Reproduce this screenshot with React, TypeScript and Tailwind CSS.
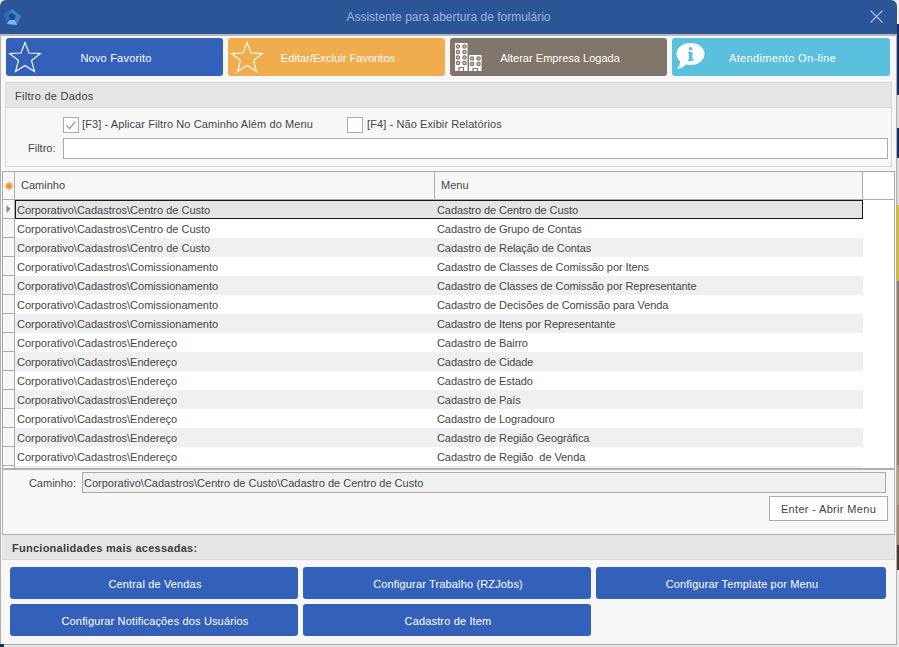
import React from "react";

const rows: [string, string][] = [
  ["Corporativo\\Cadastros\\Centro de Custo", "Cadastro de Centro de Custo"],
  ["Corporativo\\Cadastros\\Centro de Custo", "Cadastro de Grupo de Contas"],
  ["Corporativo\\Cadastros\\Centro de Custo", "Cadastro de Relação de Contas"],
  ["Corporativo\\Cadastros\\Comissionamento", "Cadastro de Classes de Comissão por Itens"],
  ["Corporativo\\Cadastros\\Comissionamento", "Cadastro de Classes de Comissão por Representante"],
  ["Corporativo\\Cadastros\\Comissionamento", "Cadastro de Decisões de Comissão para Venda"],
  ["Corporativo\\Cadastros\\Comissionamento", "Cadastro de Itens por Representante"],
  ["Corporativo\\Cadastros\\Endereço", "Cadastro de Bairro"],
  ["Corporativo\\Cadastros\\Endereço", "Cadastro de Cidade"],
  ["Corporativo\\Cadastros\\Endereço", "Cadastro de Estado"],
  ["Corporativo\\Cadastros\\Endereço", "Cadastro de País"],
  ["Corporativo\\Cadastros\\Endereço", "Cadastro de Logradouro"],
  ["Corporativo\\Cadastros\\Endereço", "Cadastro de Região Geográfica"],
  ["Corporativo\\Cadastros\\Endereço", "Cadastro de Região  de Venda"],
];

const Star = () => (
  <svg width="34" height="32" viewBox="0 0 34 32" fill="none" stroke="white" strokeWidth="1.1" strokeLinejoin="miter">
    <path d="M17 1.5 L21 12 L32.5 12.5 L23.5 19.5 L26.5 30.5 L17 24.5 L7.5 30.5 L10.5 19.5 L1.5 12.5 L13 12 Z" />
  </svg>
);

const Building = () => {
  const c = "#80766a";
  const win = (x: number, y: number) => (
    <circle key={`${x}-${y}`} cx={x} cy={y} r="1.7" fill="#cfcac4" stroke={c} strokeWidth="1.2" />
  );
  return (
    <svg width="30" height="29" viewBox="0 0 30 29">
      <rect x="1" y="0" width="12.5" height="28" fill="white" />
      <rect x="15" y="12" width="12.500" height="16" fill="white" />
      {[4, 10.500].flatMap((x) => [3.500, 9, 14.500, 20].map((y) => win(x, y)))}
      {[18, 24.500].flatMap((x) => [15.500, 21].map((y) => win(x, y)))}
      <path d="M5 28V24.500H9.500V28" fill="none" stroke={c} strokeWidth="1.200" />
      <path d="M19 28V25.500H23.500V28" fill="none" stroke={c} strokeWidth="1.200" />
    </svg>
  );
};

const Info = () => (
  <svg width="30" height="28" viewBox="0 0 30 28">
    <ellipse cx="14.500" cy="11" rx="14" ry="11" fill="white" />
    <path fill="white" d="M4 17C4.500 20 3.500 23.500 1 25.500C4.500 25.500 8 24 10.500 21Z" />
    <circle cx="14.500" cy="5.800" r="1.800" fill="#5bc0de" />
    <path fill="#5bc0de" d="M12 9H16.500V16.500H17.500V18H12V16.500H13V10.500H12Z" />
  </svg>
);

const Sun = () => (
  <svg width="10" height="10" viewBox="0 0 10 10">
    <path d="M5 0V10M0 5H10M1.500 1.500L8.500 8.500M8.500 1.500L1.500 8.500" stroke="#f9b877" strokeWidth="1" />
    <circle cx="5" cy="5" r="3" fill="#f7923a" />
  </svg>
);

function TopButton({ bg, icon, label, width, tracking }: { bg: string; icon: React.ReactNode; label: string; width: string; tracking: string }) {
  return (
    <div className={`${bg} ${width} h-[38px] rounded-[3px] flex items-center text-white text-[11px] pl-[2px] shrink-0`}>
      <div className="w-[34px] flex justify-center shrink-0">{icon}</div>
      <div className={`flex-1 text-center pr-[33px] pt-[2px] ${tracking}`}>{label}</div>
    </div>
  );
}

function QuickButton({ label, w }: { label: string; w: string }) {
  return (
    <div className={`${w} h-[32px] bg-[#3360b8] rounded-[3px] text-white text-[11px] tracking-[0.15px] pt-[2px] pl-[2px] flex items-center justify-center`}>
      {label}
    </div>
  );
}

const stripBands = [
  "h-[24px] bg-[#f0f0f0]",
  "h-[71px] bg-[#1c2f66]",
  "h-[33px] bg-[#d8d8d8]",
  "h-[30px] bg-[#1c2f66]",
  "h-[47px] bg-[#d8d8d8]",
  "h-[76px] bg-[#d9c11f]",
  "h-[184px] bg-[#8d7b6d]",
  "h-[40px] bg-[#b59a82]",
  "h-[40px] bg-[#a88774]",
  "h-[25px] bg-[#4a3a34]",
  "h-[77px] bg-[#e8e8e8]",
];

export default function App() {
  return (
    <div
      className="relative w-[899px] h-[647px] overflow-hidden bg-[#e8e8e8] text-[11px] text-[#454545] flex"
      style={{ fontFamily: '"Liberation Sans", sans-serif' }}
    >
      <div className="w-[897px] h-[645px] flex flex-col shrink-0">
        <div className="relative h-[34px] bg-[#2b5597] rounded-t-[6px] flex items-center justify-center text-[#9fb4d6] text-[12px] shrink-0">
          <svg className="absolute left-[2px] top-[7px]" width="20" height="20" viewBox="0 0 20 20">
            <path fill="#3f80d0" d="M10 2 L19 9 L15 18 L5 17 L2 7 Z" />
            <path fill="#2f6cb8" d="M10 2 L2 7 L5 17 L7.500 13 L6.500 8 Z" />
            <path fill="#7ab8f2" d="M5 17 L15 18 L12.500 13 L7.500 13 Z" />
            <path fill="#1f4a8a" d="M9.500 6 L14 8.500 L12.500 13 L7.500 13 L6.500 8 Z" />
          </svg>
          Assistente para abertura de formulário
          <svg className="absolute right-[14px] top-[10px]" width="13" height="13" viewBox="0 0 13 13" stroke="#a9bcdb" strokeWidth="1.200">
            <path d="M0.500 0.500L12.500 12.500M12.500 0.500L0.500 12.500" />
          </svg>
        </div>
        <div className="h-[2px] bg-[#b8b8b8] shrink-0" />

        <div className="flex-1 flex flex-col bg-[#f7f7f7] border-x border-b border-[#b0b0b0]">
          <div className="flex gap-[5px] pl-[5px] pt-[2px] shrink-0">
            <TopButton bg="bg-[#3360b8]" icon={<Star />} label="Novo Favorito" width="w-[217px]" tracking="tracking-[0.2px]" />
            <TopButton bg="bg-[#f0ad4e]" icon={<Star />} label="Editar/Excluir Favoritos" width="w-[217px]" tracking="tracking-[0.05px]" />
            <TopButton bg="bg-[#80766a]" icon={<Building />} label="Alterar Empresa Logada" width="w-[217px]" tracking="tracking-[0.02px]" />
            <TopButton bg="bg-[#5bc0de]" icon={<Info />} label="Atendimento On-line" width="w-[218px]" tracking="tracking-[0.35px]" />
          </div>

          <div className="ml-[4px] mt-[6px] w-[887px] h-[85px] border border-[#d8d8d8] shrink-0 flex flex-col">
            <div className="h-[25px] bg-[#e5e5e5] border-b border-[#d8d8d8] flex items-center pl-[9px] pt-[2px] tracking-[0.27px] text-[#3f3f3f] shrink-0">
              Filtro de Dados
            </div>
            <div className="flex items-center h-[31px] pl-[57px] pt-[2px] shrink-0">
              <div className="w-[16px] h-[16px] border border-[#ababab] bg-white flex items-center justify-center">
                <svg width="12" height="12" viewBox="0 0 12 12" fill="none" stroke="#9a9a9a" strokeWidth="1.200">
                  <path d="M1.500 6.500L4.500 9.500L10.500 2.500" />
                </svg>
              </div>
              <span className="ml-[3px] w-[266px] tracking-[0.09px]">[F3] - Aplicar Filtro No Caminho Além do Menu</span>
              <div className="w-[16px] h-[16px] border border-[#ababab] bg-white -ml-[1px]" />
              <span className="ml-[4px] tracking-[0.1px]">[F4] - Não Exibir Relatórios</span>
            </div>
            <div className="flex items-center pl-[22px] -mt-[1px]">
              <span className="w-[35px]">Filtro:</span>
              <div className="w-[825px] h-[21px] bg-white border border-[#ababab]" />
            </div>
          </div>

          <div className="ml-[1px] mt-[4px] w-[893px] border-x border-t border-[#ababab] bg-white shrink-0">
            <div className="flex h-[27px]">
              <div className="w-[12px] bg-[#f7f7f7] border-r border-[#ababab] flex items-center justify-center shrink-0">
                <Sun />
              </div>
              <div className="w-[420px] bg-[#f7f7f7] border-r border-[#ababab] flex items-center pl-[6px] shrink-0">Caminho</div>
              <div className="w-[428px] bg-[#f7f7f7] border-r border-[#ababab] flex items-center pl-[6px] shrink-0">Menu</div>
            </div>
            <div className="h-[269px] overflow-hidden border-t border-[#ababab]">
              {rows.map((r, i) => (
                <div key={i} className="flex h-[19px]">
                  <div className="w-[12px] bg-[#f7f7f7] border-r border-b border-[#ababab] flex items-center justify-center shrink-0">
                    {i === 0 && (
                      <svg width="5" height="8" viewBox="0 0 5 8"><path d="M0.500 0L4.500 4L0.500 8Z" fill="#8a8a8a" /></svg>
                    )}
                  </div>
                  <div
                    className={`flex w-[848px] shrink-0 ${
                      i === 0
                        ? "bg-[#e5e5e5] outline-1 -outline-offset-1 outline-[#1a1a1a]"
                        : i % 2 === 0
                        ? "bg-[#f0f0f0]"
                        : "bg-white"
                    }`}
                  >
                    <div className="w-[420px] pl-[2px] pt-[1px] leading-[19px] shrink-0">{r[0]}</div>
                    <div className="pl-[2px] pt-[1px] leading-[19px] whitespace-pre tracking-[-0.08px]">{r[1]}</div>
                  </div>
                </div>
              ))}
              <div className="flex h-[3px]">
                <div className="w-[12px] border-r border-[#ababab] bg-[#f7f7f7]" />
                <div className="w-[848px] bg-[#f0f0f0]" />
              </div>
            </div>
          </div>

          <div className="ml-[1px] w-[893px] h-[67px] border-x border-b border-[#b0b0b0] border-t-[2px] border-t-[#b0b0b0] shrink-0">
            <div className="flex items-center pt-[2px]">
              <span className="w-[79px] text-right pr-[6px] pt-[1px]">Caminho:</span>
              <div className="w-[804px] h-[21px] bg-[#f0f0f0] border border-[#ababab] flex items-center pl-[1px] pt-[1px]">
                Corporativo\Cadastros\Centro de Custo\Cadastro de Centro de Custo
              </div>
            </div>
            <div className="flex justify-end pr-[6px] pt-[3px]">
              <div className="w-[119px] h-[25px] bg-white border border-[#ababab] flex items-center justify-center pt-[1px] text-[#3f3f3f] tracking-[0.33px]">
                Enter - Abrir Menu
              </div>
            </div>
          </div>

          <div className="ml-[1px] w-[893px] h-[25px] bg-[#e5e5e5] border-b border-[#d8d8d8] flex items-center pl-[10px] pt-[2px] font-bold tracking-[0.26px] text-[#3f3f3f] shrink-0">
            Funcionalidades mais acessadas:
          </div>

          <div className="ml-[9px] mt-[7px] flex flex-col gap-[5px]">
            <div className="flex gap-[5px]">
              <QuickButton label="Central de Vendas" w="w-[288px]" />
              <QuickButton label="Configurar Trabalho (RZJobs)" w="w-[288px]" />
              <QuickButton label="Configurar Template por Menu" w="w-[290px]" />
            </div>
            <div className="flex gap-[5px]">
              <QuickButton label="Configurar Notificações dos Usuários" w="w-[288px]" />
              <QuickButton label="Cadastro de Item" w="w-[288px]" />
            </div>
          </div>
        </div>
      </div>

      <div className="w-[2px] flex flex-col shrink-0">
        {stripBands.map((b) => (
          <div key={b} className={`${b} shrink-0`} />
        ))}
      </div>

      <div className="absolute left-0 bottom-0 w-[4px] h-[3px] bg-[#14305f]" />
    </div>
  );
}
